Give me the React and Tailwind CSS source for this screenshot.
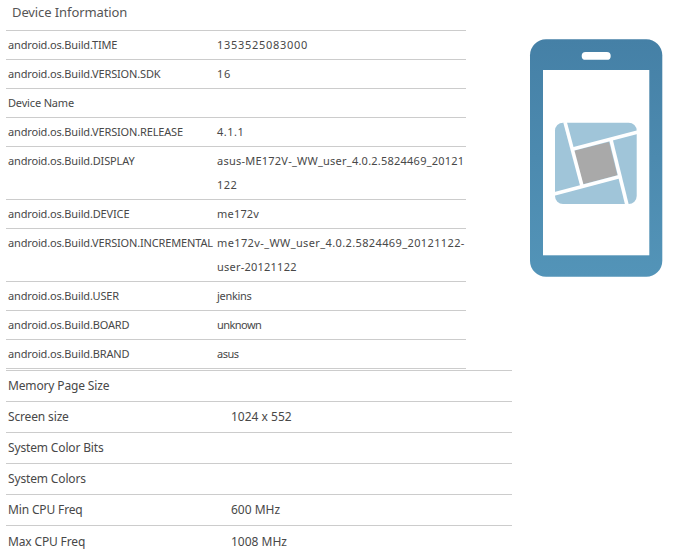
const buildRows = [
  { label: 'android.os.Build.TIME', value: [['1353525083000', 'tracking-[0.7px]']] },
  { label: 'android.os.Build.VERSION.SDK', value: [['16', 'tracking-[0.8px]']] },
  { label: 'Device Name', value: [] },
  { label: 'android.os.Build.VERSION.RELEASE', value: [['4.1.1', 'tracking-[0.5px]']] },
  {
    label: 'android.os.Build.DISPLAY',
    value: [
      ['asus-ME172V-_WW_user_4.0.2.5824469_20121', 'tracking-[0.23px]'],
      ['122', 'tracking-[0.4px]'],
    ],
  },
  { label: 'android.os.Build.DEVICE', value: [['me172v', 'tracking-[0.2px]']] },
  {
    label: 'android.os.Build.VERSION.INCREMENTAL',
    value: [
      ['me172v-_WW_user_4.0.2.5824469_20121122-', 'tracking-[0.38px]'],
      ['user-20121122', 'tracking-[0.23px]'],
    ],
  },
  { label: 'android.os.Build.USER', value: [['jenkins', 'tracking-[-0.3px]']] },
  { label: 'android.os.Build.BOARD', value: [['unknown', 'tracking-[-0.55px]']] },
  { label: 'android.os.Build.BRAND', value: [['asus', 'tracking-[-0.5px]']] },
];

const specRows = [
  { label: 'Memory Page Size', value: '' },
  { label: 'Screen size', value: '1024 x 552' },
  { label: 'System Color Bits', value: '' },
  { label: 'System Colors', value: '' },
  { label: 'Min CPU Freq', value: '600 MHz' },
  { label: 'Max CPU Freq', value: '1008 MHz' },
];

function PhoneIcon() {
  return (
    <svg width="134" height="240" viewBox="529 38 134 240" className="block">
      <defs>
        <linearGradient id="phoneBody" x1="0" y1="0" x2="0" y2="1">
          <stop offset="0" stopColor="#4580a6" />
          <stop offset="1" stopColor="#5394b8" />
        </linearGradient>
      </defs>
      <rect x="530" y="39.3" width="132.3" height="237.4" rx="16" fill="url(#phoneBody)" />
      <rect x="543" y="70" width="106.3" height="185.3" fill="#ffffff" />
      <rect x="581.7" y="52" width="29" height="7.8" rx="3.9" fill="#ffffff" />
      <rect x="555" y="122.7" width="81.7" height="81.3" rx="8" fill="#a0c5d9" />
      <polygon points="574,150.7 609,142 617.3,175.3 582.7,184.3" fill="#a9a9a9" />
      <g stroke="#ffffff" strokeWidth="3.6" fill="none">
        <line x1="565" y1="122" x2="582" y2="186" />
        <line x1="573" y1="149" x2="638" y2="132" />
        <line x1="611" y1="140" x2="627" y2="205" />
        <line x1="554" y1="194" x2="620" y2="176.5" />
      </g>
    </svg>
  );
}

export default function App() {
  return (
    <div className="flex w-[681px] h-[555px] overflow-hidden bg-white text-[#484848] font-['Noto_Sans','Liberation_Sans',sans-serif]">
      <div className="w-[512px] shrink-0 pl-[6px]">
        <h2 className="h-[30px] pl-[6px] pt-[2px] text-[13px] leading-[20px] tracking-[-0.1px] font-normal text-[#555555]">Device Information</h2>
        <div className="w-[460px] border-t border-[#cccccc]">
          {buildRows.map((row) => (
            <div key={row.label} className="flex border-b border-[#cccccc] py-[2px] text-[11px] leading-[24px]">
              <div className="w-[211px] shrink-0 pl-[2px] whitespace-nowrap tracking-[-0.16px]">{row.label}</div>
              <div className="whitespace-nowrap">
                {row.value.map(([line, track]) => (
                  <div key={line} className={track}>{line}</div>
                ))}
              </div>
            </div>
          ))}
        </div>
        <div className="mt-[1px] border-t border-[#cccccc]">
          {specRows.map((row) => (
            <div key={row.label} className="flex h-[31px] items-center border-b border-[#cccccc] text-[12px] last:border-b-0">
              <div className="w-[225px] shrink-0 pl-[2px] tracking-[-0.15px]">{row.label}</div>
              <div>{row.value}</div>
            </div>
          ))}
        </div>
      </div>
      <div className="pl-[17px] pt-[38px]">
        <PhoneIcon />
      </div>
    </div>
  );
}
